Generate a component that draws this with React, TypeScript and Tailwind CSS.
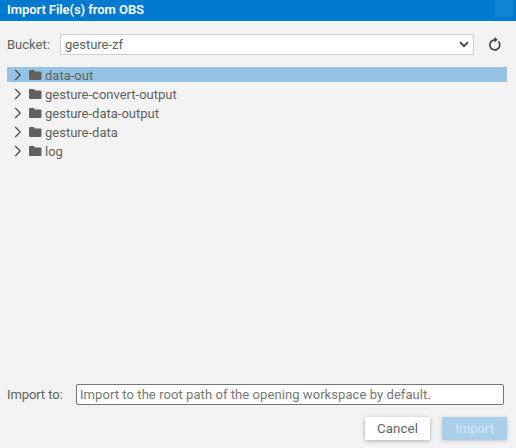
const folders = ['data-out', 'gesture-convert-output', 'gesture-data-output', 'gesture-data', 'log'];

function FolderRow({ name, selected }: { name: string; selected: boolean }) {
  return (
    <li className="flex h-[19px] items-start pl-[7px]">
      <div className={`flex h-[15px] w-full items-center ${selected ? 'bg-[#94c3e5]' : ''}`}>
        <svg width="8" height="12" viewBox="0 0 8 12" className="ml-[7px] mt-px shrink-0" fill="none" stroke="#4a4a4a" strokeWidth="1.2">
          <path d="M1.2 1L6.2 6L1.2 11" />
        </svg>
        <svg width="13" height="10" viewBox="0 0 13 10" className="ml-[7px] shrink-0" fill="#616161">
          <path d="M0 1Q0 0 1 0H4.3Q5.2 0 5.6 1L6 1.5H11.5Q12.5 1.5 12.5 2.5V9Q12.5 10 11.5 10H1Q0 10 0 9Z" />
        </svg>
        <span className="mt-px ml-[3px] text-[13px] leading-[15px] whitespace-nowrap">{name}</span>
      </div>
    </li>
  );
}

export default function App() {
  return (
    <main className="flex h-[448px] w-[516px] flex-col overflow-hidden bg-[#f3f3f3] font-['Roboto','Liberation_Sans',sans-serif] text-[13px] text-[#616161]">
      <header className="flex h-[21px] shrink-0 items-start justify-between bg-[#007acf] pr-[3px] pl-[7px] text-white">
        <h1 className="mt-px text-[13px] leading-[17px] font-semibold tracking-[-0.06px]">Import File(s) from OBS</h1>
        <div className="h-[17px] w-[18px] bg-[#1283d2]" />
      </header>

      <div className="mt-[13px] flex h-[21px] shrink-0 items-center pl-[7px]">
        <span className="w-[53px]">Bucket:</span>
        <button className="flex h-[21px] w-[414px] items-center justify-between border border-[#cecece] bg-white pr-1 pl-1">
          <span>gesture-zf</span>
          <svg width="10" height="7" viewBox="0 0 10 7" fill="none" stroke="#505050" strokeWidth="2">
            <path d="M1 1.2L5 5L9 1.2" />
          </svg>
        </button>
        <svg width="14" height="16" viewBox="0 0 14 16" className="-mt-px ml-[14px]" fill="none" stroke="#424242" strokeWidth="1.7">
          <path d="M7.6 3.9H6.6A5 5 0 1 0 10.4 5.4" />
          <path d="M6.6 0.8L9.6 3.7L6.6 6.4Z" fill="#424242" stroke="none" />
        </svg>
      </div>

      <ul className="mt-3 mr-[9px] grow">
        {folders.map((name, i) => (
          <FolderRow key={name} name={name} selected={i === 0} />
        ))}
      </ul>

      <div className="flex h-[21px] shrink-0 items-center pl-[7px]">
        <label htmlFor="path" className="w-[69px] tracking-[-0.1px]">Import to:</label>
        <input
          id="path"
          placeholder="Import to the root path of the opening workspace by default."
          className="h-[21px] w-[428px] rounded-[2px] border border-[#767676] bg-white px-[3px] tracking-[0.07px] placeholder:text-[#767676]"
        />
      </div>

      <footer className="mt-3 mb-2 flex h-[23px] shrink-0 justify-end gap-3 pr-[9px]">
        <button className="w-[65px] rounded-[1px] bg-white text-[13.3px] tracking-[0.1px] shadow-[0_1px_4px_rgba(0,0,0,0.3)]">Cancel</button>
        <button className="w-[65px] rounded-[1px] bg-[#a9cfea] font-semibold tracking-[-0.1px] text-[#cbe2f3] shadow-[0_1px_4px_rgba(0,0,0,0.18)]">Import</button>
      </footer>
    </main>
  );
}
